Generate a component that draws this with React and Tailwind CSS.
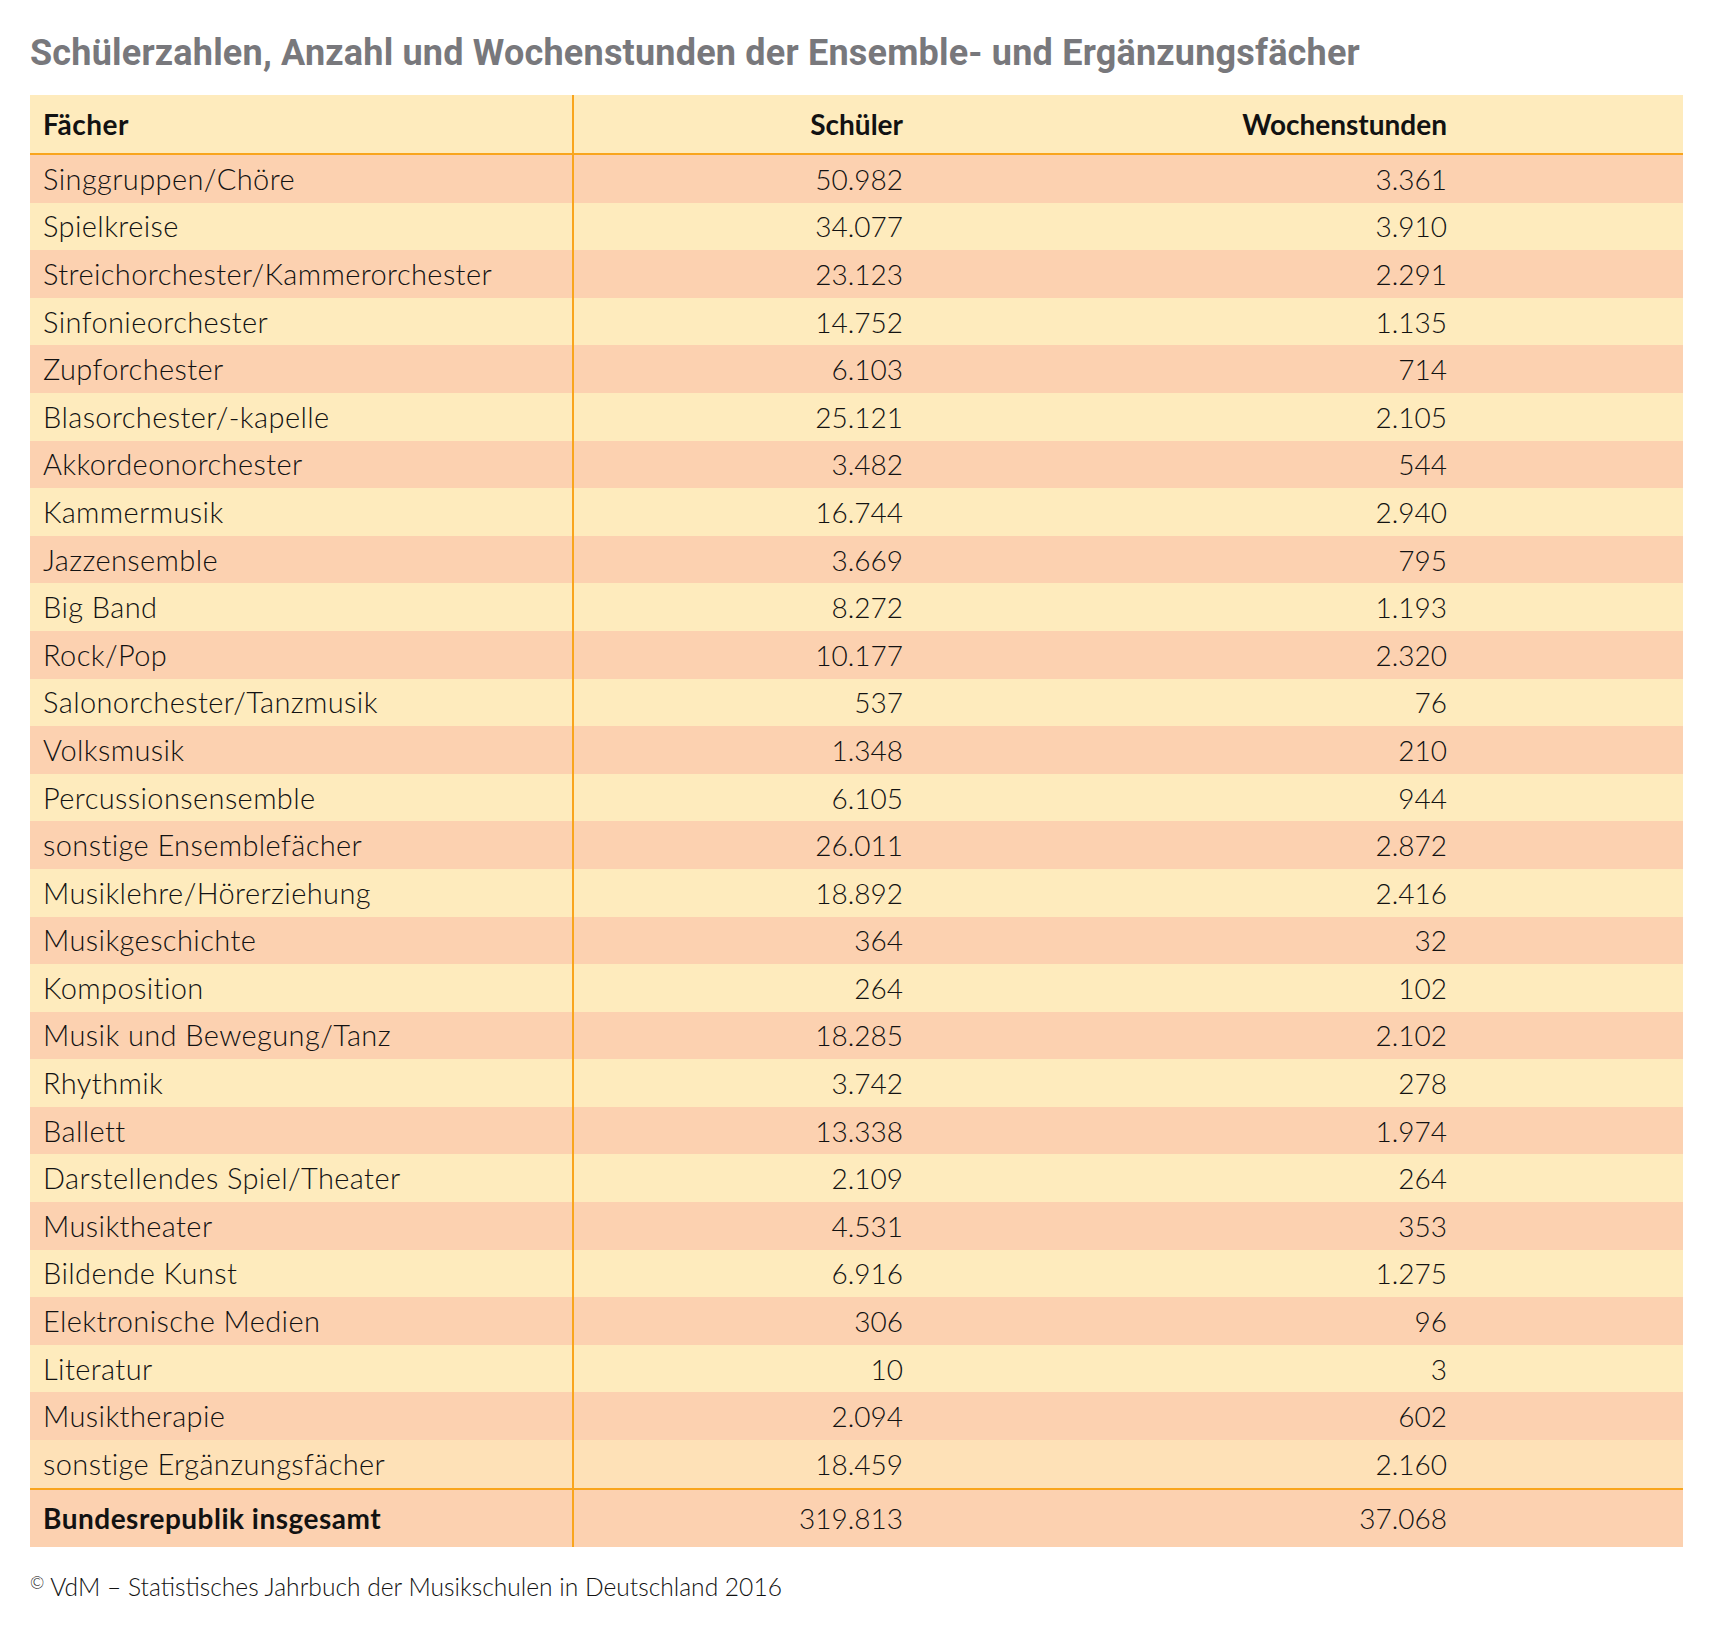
const rows = [
  ["Singgruppen/Chöre", "50.982", "3.361"],
  ["Spielkreise", "34.077", "3.910"],
  ["Streichorchester/Kammerorchester", "23.123", "2.291"],
  ["Sinfonieorchester", "14.752", "1.135"],
  ["Zupforchester", "6.103", "714"],
  ["Blasorchester/-kapelle", "25.121", "2.105"],
  ["Akkordeonorchester", "3.482", "544"],
  ["Kammermusik", "16.744", "2.940"],
  ["Jazzensemble", "3.669", "795"],
  ["Big Band", "8.272", "1.193"],
  ["Rock/Pop", "10.177", "2.320"],
  ["Salonorchester/Tanzmusik", "537", "76"],
  ["Volksmusik", "1.348", "210"],
  ["Percussionsensemble", "6.105", "944"],
  ["sonstige Ensemblefächer", "26.011", "2.872"],
  ["Musiklehre/Hörerziehung", "18.892", "2.416"],
  ["Musikgeschichte", "364", "32"],
  ["Komposition", "264", "102"],
  ["Musik und Bewegung/Tanz", "18.285", "2.102"],
  ["Rhythmik", "3.742", "278"],
  ["Ballett", "13.338", "1.974"],
  ["Darstellendes Spiel/Theater", "2.109", "264"],
  ["Musiktheater", "4.531", "353"],
  ["Bildende Kunst", "6.916", "1.275"],
  ["Elektronische Medien", "306", "96"],
  ["Literatur", "10", "3"],
  ["Musiktherapie", "2.094", "602"],
  ["sonstige Ergänzungsfächer", "18.459", "2.160"],
];

function Row({ cells, className, header }) {
  const labelCls = header
    ? "font-bold tracking-[0.5px]"
    : "font-light text-[29px] tracking-[0.4px]";
  const numCls = header ? "font-bold" : "font-light";
  return (
    <div className={"flex items-center " + className}>
      <div className={"w-[542px] pl-[13px] " + labelCls}>{cells[0]}</div>
      <div className="w-[331px] self-stretch flex items-center justify-end border-l-2 border-[#f9a51d]">
        <span className={numCls}>{cells[1]}</span>
      </div>
      <div className="w-[544px] text-right">
        <span className={numCls}>{cells[2]}</span>
      </div>
      <div className="flex-1" />
    </div>
  );
}

export default function App() {
  return (
    <div className="w-[1711px] h-[1631px] bg-white px-[30px] pt-[31px] text-[#121212] font-['Lato',sans-serif]">
      <h1 className="text-[36px] leading-[44px] font-bold tracking-[0.2px] text-[#78787c] font-['Roboto',sans-serif] whitespace-nowrap">
        Schülerzahlen, Anzahl und Wochenstunden der Ensemble- und Ergänzungsfächer
      </h1>
      <div className="mt-[20px] w-[1653px] text-[28px] leading-[34px]">
        <Row
          cells={["Fächer", "Schüler", "Wochenstunden"]}
          header
          className="h-[60px] bg-[#feebbd] border-b-2 border-[#f9a51d]"
        />
        {rows.map((r, i) => (
          <Row
            key={r[0]}
            cells={r}
            className={
              "h-[47.6px] " +
              (i === rows.length - 1
                ? "bg-[#fee1b7]"
                : i % 2 === 0
                ? "bg-[#fcd1b0]"
                : "bg-[#feebbd]")
            }
          />
        ))}
        <div className="flex items-center h-[59px] bg-[#fcd1b0] border-t-2 border-[#f9a51d]">
          <div className="w-[542px] pl-[13px] font-bold tracking-[0.5px]">Bundesrepublik insgesamt</div>
          <div className="w-[331px] self-stretch flex items-center justify-end border-l-2 border-[#f9a51d]">
            <span className="font-light">319.813</span>
          </div>
          <div className="w-[544px] text-right">
            <span className="font-light">37.068</span>
          </div>
          <div className="flex-1" />
        </div>
      </div>
      <p className="mt-[21px] text-[24.6px] leading-[30px] font-light text-[#121212]">
        <span className="text-[17px] align-[7px]">©</span> VdM – Statistisches Jahrbuch der Musikschulen in Deutschland 2016
      </p>
    </div>
  );
}
